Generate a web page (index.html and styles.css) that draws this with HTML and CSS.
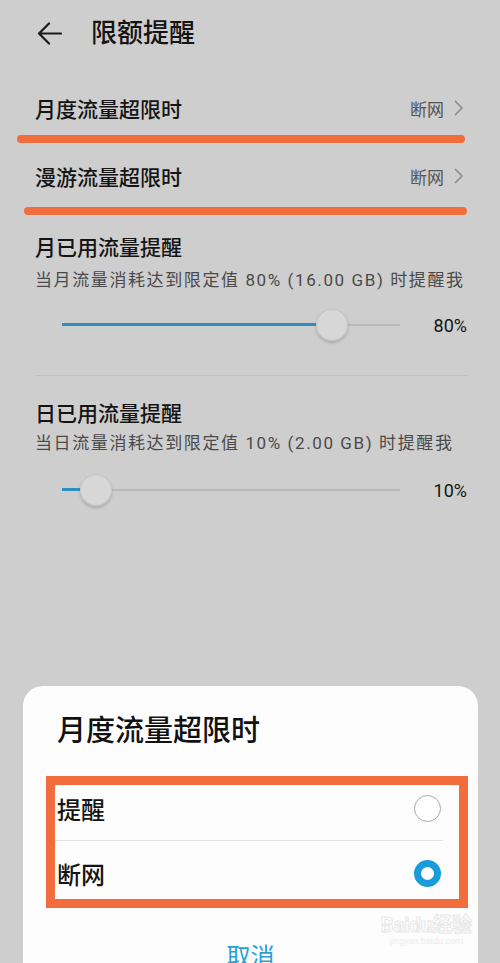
FILE: index.html
```html
<!DOCTYPE html>
<html lang="zh-CN">
<head>
    <meta charset="utf-8">
    <title>限额提醒</title>
    <meta name="viewport" content="width=device-width, initial-scale=1">
    <link rel="stylesheet" href="styles.css">
</head>

<body>
    <div class="screen">
        <header class="topbar">
            <svg class="back" width="25" height="23" viewBox="0 0 25 23">
                <path d="M12 1.5 L2 11.5 L12 21.5 M2 11.5 H24" fill="none" stroke="#1a1a1a" stroke-width="2.2" stroke-linecap="round" stroke-linejoin="round"/>
            </svg>
            <h1>限额提醒</h1>
        </header>

        <div class="link-row first">
            <span class="label">月度流量超限时</span>
            <span class="value">断网
                <svg width="9" height="16" viewBox="0 0 9 16"><path d="M1 1 L8 8 L1 15" fill="none" stroke="#8a8a8a" stroke-width="1.5"/></svg>
            </span>
        </div>
        <div class="mark mark-1"></div>

        <div class="link-row second">
            <span class="label">漫游流量超限时</span>
            <span class="value">断网
                <svg width="9" height="16" viewBox="0 0 9 16"><path d="M1 1 L8 8 L1 15" fill="none" stroke="#8a8a8a" stroke-width="1.5"/></svg>
            </span>
        </div>
        <div class="mark mark-2"></div>

        <section class="usage usage-month">
            <h2>月已用流量提醒</h2>
            <p>当月流量消耗达到限定值 80% (16.00 GB) 时提醒我</p>
            <div class="slider">
                <div class="track" style="--value: 80%">
                    <div class="fill"></div>
                    <div class="thumb"></div>
                </div>
                <span class="pct">80%</span>
            </div>
        </section>

        <hr class="divider">

        <section class="usage usage-day">
            <h2>日已用流量提醒</h2>
            <p>当日流量消耗达到限定值 10% (2.00 GB) 时提醒我</p>
            <div class="slider">
                <div class="track" style="--value: 10%">
                    <div class="fill"></div>
                    <div class="thumb"></div>
                </div>
                <span class="pct">10%</span>
            </div>
        </section>
    </div>

    <!-- bottom sheet for the monthly limit action -->
    <div class="sheet">
        <h3>月度流量超限时</h3>
        <div class="choices">
            <div class="choice">
                <span>提醒</span>
                <span class="radio"></span>
            </div>
            <div class="choice">
                <span>断网</span>
                <span class="radio checked"></span>
            </div>
        </div>
        <div class="cancel">取消</div>
        <div class="stamp">
            <span class="stamp-logo">Baidu经验</span>
            <span class="stamp-url">jingyan.baidu.com</span>
        </div>
    </div>
</body>
</html>
```

FILE: styles.css
```css
        /* Page */
        html, body {height: 963px; overflow: hidden}
        body {margin: 0; background: #cecece; color: #141414; position: relative;
              font-family: "Roboto", "Noto Sans CJK SC", sans-serif}

        /* Title bar */
        .topbar {display: flex; align-items: center; height: 66px; padding-left: 37px}
        .back {margin-right: 29px; flex: none}
        .topbar h1 {margin: 0; font-size: 26px; font-weight: 500; line-height: 1}

        /* Link rows */
        .link-row {display: flex; justify-content: space-between; align-items: center;
                   height: 56px; padding: 0 37px 0 35px}
        .link-row.first {margin-top: 14px}
        .link-row.second {margin-top: 5px}
        .label {font-size: 21px; font-weight: 500}
        .value {display: flex; align-items: center; gap: 10px; font-size: 17px; color: #555}

        /* Orange marker strokes */
        .mark {height: 8px; background: #f26d3d; border-radius: 4px}
        .mark-1 {margin: -1px 35px 0 17px}
        .mark-2 {margin: 3px 33px 0 24px}

        /* Usage reminders */
        .usage {padding: 0 33px 0 35px}
        .usage h2 {margin: 0; font-size: 21px; font-weight: 500; line-height: 28px}
        .usage p {margin: 7px 0 0; font-size: 17px; line-height: 22px; color: #4a4a4a; letter-spacing: 1.6px; white-space: nowrap}
        .usage-month {margin-top: 19px}
        .usage-day {margin-top: 24px}
        .usage-day p {margin-top: 4px}
        .slider {display: flex; align-items: center; height: 40px; margin-top: 14px}
        .usage-day .slider {margin-top: 16px}
        .track {position: relative; flex: none; width: 338px; height: 32px; margin-left: 27px}
        .track::before {content: ""; position: absolute; left: 0; right: 0; top: 15px; height: 2px; background: #bababa}
        .fill {position: absolute; left: 0; top: 14px; height: 3px; width: calc(var(--value) - 16px); background: #2e8fc4}
        .thumb {position: absolute; top: 0; left: calc(var(--value) - 16px); width: 32px; height: 32px;
                border-radius: 50%; background: #d7d7d7;
                box-shadow: 0 2px 3px rgba(0,0,0,0.18), inset 0 0 0 1px #c4c4c4}
        .pct {margin-left: auto; font-size: 18px}

        .divider {margin: 30px 33px 0 35px; border: none; height: 1px; background: #c2c2c2}

        /* Bottom sheet */
        .sheet {position: absolute; left: 23px; right: 22px; top: 686px; height: 320px;
                background: #fdfdfd; border-radius: 20px 20px 0 0; padding-top: 25px; box-sizing: border-box}
        .sheet h3 {margin: 0 0 0 34px; font-size: 29px; font-weight: 500; line-height: 40px; color: #111}
        .choices {margin: 25px 10px 0 23px; border: 9px solid #f26d3d; padding-right: 16px}
        .choice {display: flex; justify-content: space-between; align-items: center;
                 padding-left: 2px; font-size: 24px; font-weight: 500; box-sizing: border-box}
        .choice:first-child {height: 56px; padding-bottom: 9px; border-bottom: 1px solid #e2e2e2}
        .choice:last-child {height: 58px; padding-top: 7px}
        .radio {width: 27px; height: 27px; border-radius: 50%; border: 1.5px solid #a9a9a9;
                box-sizing: border-box; margin-right: 2px; background: #fff}
        .radio.checked {border: 7px solid #1a9bdc}
        .cancel {margin-top: 34px; text-align: center; font-size: 24px; line-height: 30px; color: #2a9fd5}

        /* Faint site stamp in the corner */
        .stamp {position: absolute; right: 6px; top: 228px; display: flex; flex-direction: column; align-items: center}
        .stamp-logo {font-size: 20px; font-weight: bold; line-height: 22px;
                     color: transparent; -webkit-text-stroke: 1px #e8e8e8}
        .stamp-url {font-size: 9px; color: #ececec; line-height: 10px}
```
